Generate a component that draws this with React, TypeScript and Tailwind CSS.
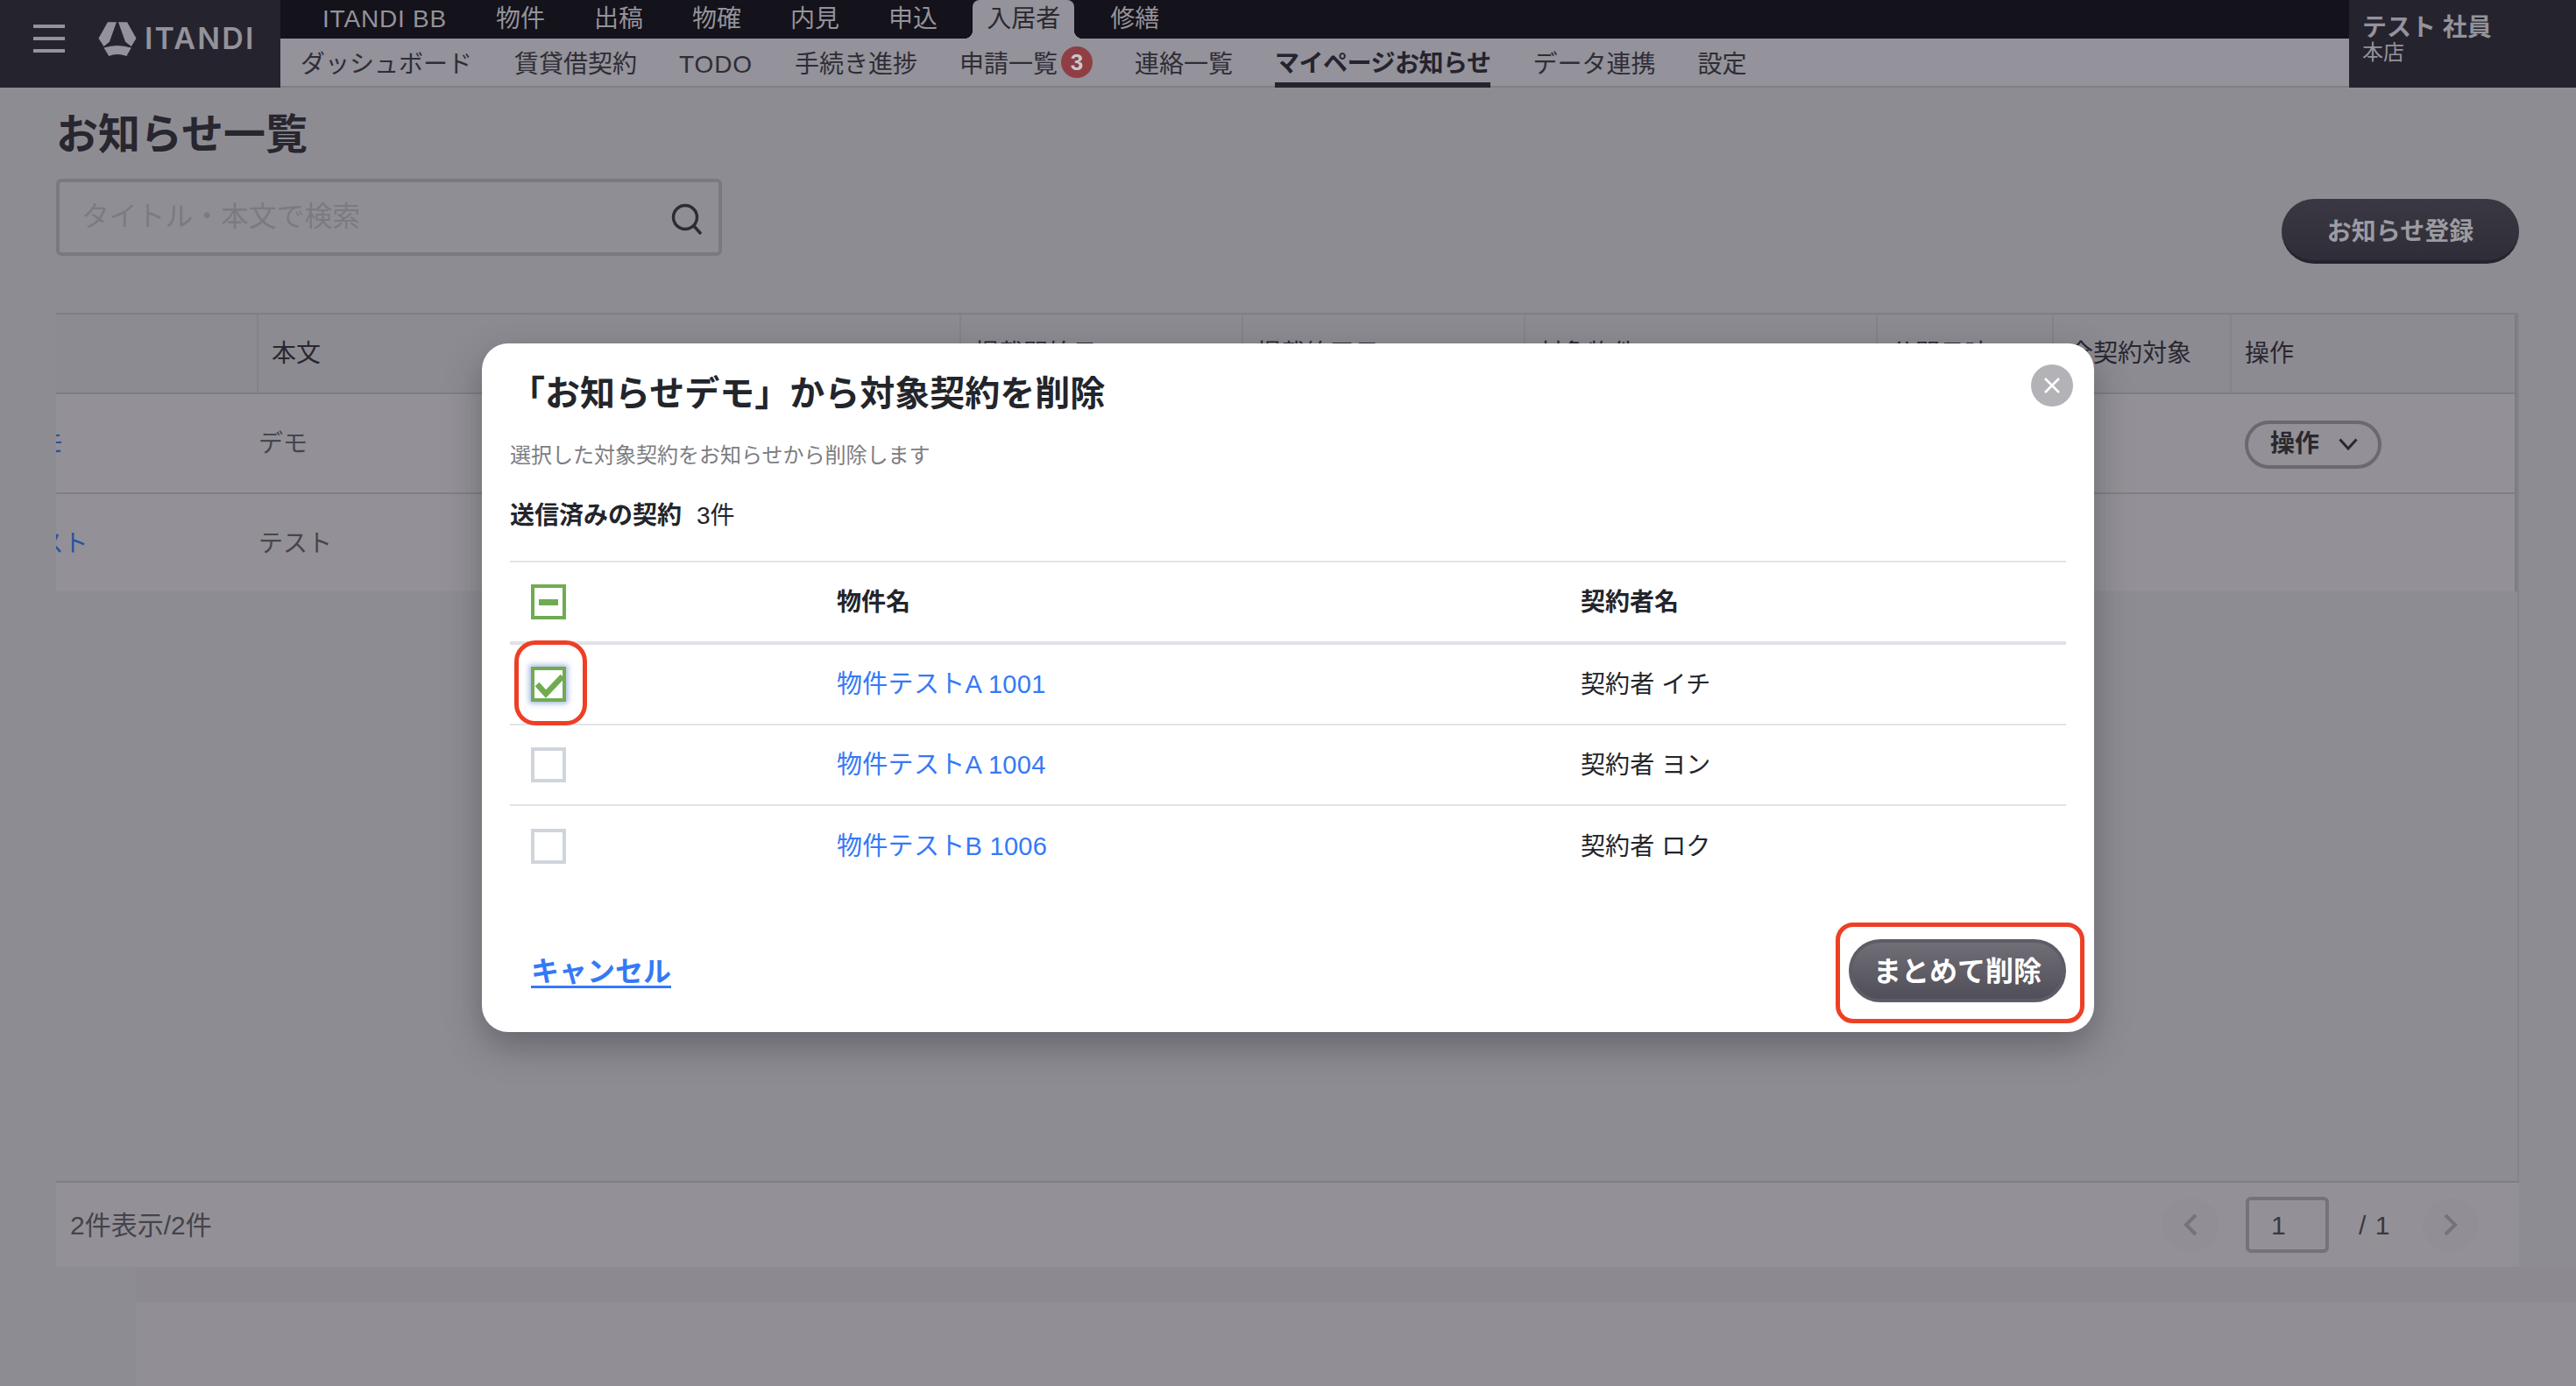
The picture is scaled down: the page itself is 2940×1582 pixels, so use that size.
import React from 'react';

const topNav = ['物件', '出稿', '物確', '内見'];
const subNav = ['ダッシュボード', '賃貸借契約', 'TODO', '手続き進捗'];

const contracts = [
  { id: 1, name: '物件テストA 1001', person: '契約者 イチ', checked: true },
  { id: 2, name: '物件テストA 1004', person: '契約者 ヨン', checked: false },
  { id: 3, name: '物件テストB 1006', person: '契約者 ロク', checked: false },
];

const Header: React.FC = () => (
  <header className="flex h-[100px] shrink-0">
    <div className="flex w-[320px] items-center bg-[#25232e] pb-[12px] pl-[38px]">
      <div className="flex w-[36px] flex-col gap-[10px]">
        <span className="h-[4px] bg-[#94929a]" />
        <span className="h-[4px] bg-[#94929a]" />
        <span className="h-[4px] bg-[#94929a]" />
      </div>
      <svg className="ml-[38px]" width="44" height="39" viewBox="37 12 128 116" fill="#94929a">
        <path d="M68 13 L98 13 L74 80 L55 95 L37 68 Z" />
        <path d="M104 13 L134 13 L165 68 L148 95 L128 80 Z" />
        <path d="M55 100 Q100 84 148 100 L132 128 Q100 116 72 128 Z" />
      </svg>
      <span className="ml-[9px] text-[34px] leading-none font-semibold tracking-[2.2px] text-[#94929a] [font-family:Inter,sans-serif]">
        ITANDI
      </span>
    </div>

    <div className="flex min-w-0 flex-1 flex-col">
      <nav className="flex h-[44px] items-center bg-[#14121a] pl-[48px] text-[28px] leading-none text-[#94929a]">
        <span className="mr-[56px] tracking-[0.8px]">ITANDI BB</span>
        {topNav.map((item) => (
          <span key={item} className="mr-[56px]">
            {item}
          </span>
        ))}
        <span className="mr-[40px]">申込</span>
        <span className="relative flex h-[44px] items-center rounded-t-[8px] bg-[#94929a] px-[16px] text-[#2a2830] before:absolute before:bottom-0 before:-left-[10px] before:h-[10px] before:w-[10px] before:bg-[radial-gradient(circle_at_0_0,#14121a_10px,#94929a_10.5px)] after:absolute after:-right-[10px] after:bottom-0 after:h-[10px] after:w-[10px] after:bg-[radial-gradient(circle_at_100%_0,#14121a_10px,#94929a_10.5px)]">
          入居者
        </span>
        <span className="ml-[41px]">修繕</span>
      </nav>
      <nav className="flex h-[56px] items-stretch gap-[48px] border-b-2 border-[#7f7d85] bg-[#94929a] pl-[23px] text-[28px] leading-none text-[#2f2d36]">
        {subNav.map((item) => (
          <span key={item} className={`flex items-center pt-[6px] ${item === 'TODO' ? 'tracking-[0.9px]' : ''}`}>
            {item}
          </span>
        ))}
        <span className="flex items-center gap-[4px] pt-[6px]">
          申請一覧
          <span className="-mt-[6px] flex h-[36px] w-[36px] items-center justify-center rounded-full bg-[#8f3e44] text-[26px] font-bold text-[#c9c8cb]">
            3
          </span>
        </span>
        <span className="flex items-center pt-[6px]">連絡一覧</span>
        <span className="-mb-[2px] flex items-center border-b-[6px] border-[#25232e] pt-[7px] font-bold tracking-[-0.5px] text-[#25232e]">
          マイページお知らせ
        </span>
        <span className="flex items-center pt-[6px]">データ連携</span>
        <span className="flex items-center pt-[6px]">設定</span>
      </nav>
    </div>

    <div className="w-[259px] bg-[#25232e] pt-[16px] pl-[15px] text-[#94929a]">
      <p className="text-[28px] leading-[32px] font-bold">テスト 社員</p>
      <p className="text-[24px] leading-[24px]">本店</p>
    </div>
  </header>
);

const cellWidths = ['w-[231px]', 'w-[802px]', 'w-[322px]', 'w-[322px]', 'w-[402px]', 'w-[201px]', 'w-[203px]', 'flex-1'];
const headLabels = ['', '本文', '掲載開始日', '掲載終了日', '対象物件', '公開日時', '全契約対象', '操作'];

const NoticeTable: React.FC = () => (
  <div className="flex h-[991px] flex-col border-r-2 border-[#85838a]">
    <div className="border-r-[3px] border-[#7e7d82]">
      <div className="flex h-[93px] border-y-2 border-[#7f7e83] bg-[#8d8b92] text-[28px] text-[#29272f]">
        {headLabels.map((label, i) => (
          <div
            key={i}
            className={`flex items-center border-r-2 border-[#85838a] pl-[15px] last:border-r-0 ${cellWidths[i]} ${i === 6 ? 'pl-[17px]' : ''}`}
          >
            {label}
          </div>
        ))}
      </div>
      <div className="flex h-[114px] items-center border-b-2 border-[#7f7e83] bg-[#939197] pt-[2px] text-[28px] text-[#47454d]">
        <div className="w-[231px] overflow-hidden whitespace-nowrap text-[#2b52a0]">
          <span className="-ml-[159px] block">お知らせデモ</span>
        </div>
        <div className="w-[2267px] pl-[2px]">
          <span className="-ml-[2px] block">デモ</span>
        </div>
        <div className="flex-1">
          <div className="flex h-[55px] w-[156px] items-center justify-center gap-[22px] rounded-full border-4 border-[#6b6970] pl-[2px] font-bold text-[#2a2830]">
            操作
            <svg width="22" height="14" viewBox="0 0 22 14" fill="none" stroke="#2a2830" strokeWidth="3">
              <path d="M1.5 1.5 L11 12 L20.5 1.5" />
            </svg>
          </div>
        </div>
      </div>
      <div className="flex h-[111px] items-center bg-[#939197] pt-[2px] text-[28px] text-[#47454d]">
        <div className="w-[231px] overflow-hidden whitespace-nowrap text-[#2b52a0]">
          <span className="-ml-[159px] block">お知らせテスト</span>
        </div>
        <div className="flex-1">
          <span className="block">テスト</span>
        </div>
      </div>
    </div>
  </div>
);

const Pager: React.FC = () => (
  <div className="flex items-center">
    <span className="flex h-[60px] w-[64px] items-center justify-center rounded-full bg-[#918f95]">
      <svg width="18" height="26" viewBox="0 0 18 26" fill="none" stroke="#75737a" strokeWidth="4">
        <path d="M15 2 L4 13 L15 24" />
      </svg>
    </span>
    <span className="ml-[31px] flex h-[64px] w-[95px] items-center rounded-[6px] border-4 border-[#75737a] pl-[25px] text-[30px] text-[#3a3840]">
      1
    </span>
    <span className="ml-[34px] w-[73px] text-[30px] tracking-[1px] text-[#3a3840]">/ 1</span>
    <span className="flex h-[60px] w-[64px] items-center justify-center rounded-full bg-[#918f95]">
      <svg width="18" height="26" viewBox="0 0 18 26" fill="none" stroke="#75737a" strokeWidth="4">
        <path d="M3 2 L14 13 L3 24" />
      </svg>
    </span>
  </div>
);

const Checkbox: React.FC<{ state: 'on' | 'off' | 'mixed' }> = ({ state }) => {
  if (state === 'off') {
    return <span className="block h-[40px] w-[40px] border-4 border-[#d0d5dc] bg-white" />;
  }
  return (
    <span
      className={`flex h-[40px] w-[40px] items-center justify-center border-4 border-[#70ab52] bg-white ${
        state === 'on' ? 'shadow-[0_0_6px_2px_rgba(90,120,200,0.55)]' : ''
      }`}
    >
      {state === 'mixed' ? (
        <span className="h-[7px] w-[22px] bg-[#70ab52]" />
      ) : (
        <svg className="shrink-0" width="40" height="40" viewBox="0 0 40 40" fill="none" stroke="#70ab52" strokeWidth="6.5">
          <path d="M7 20 L17 31 L36 11" />
        </svg>
      )}
    </span>
  );
};

const RemoveDialog: React.FC = () => (
  <div className="absolute inset-0 flex items-start justify-center pt-[392px]">
    <div className="relative h-[786px] w-[1840px] rounded-[30px] bg-white px-[32px] shadow-[0_16px_40px_rgba(30,28,36,0.35)]">
      <h2 className="mt-[37px] text-[40px] leading-[40px] font-bold text-[#23252b]">
        「お知らせデモ」から対象契約を削除
      </h2>
      <p className="mt-[35px] text-[24px] leading-[32px] text-[#7c7d82]">選択した対象契約をお知らせから削除します</p>
      <p className="mt-[33px] flex gap-[17px] text-[28px] leading-[40px] text-[#23252b]">
        <span className="font-bold">送信済みの契約</span>
        <span>3件</span>
      </p>

      <div className="mt-[31px]">
        <div className="grid h-[96px] grid-cols-[373px_849px_1fr] items-center border-t-2 border-b-4 border-t-[#e1e4e8] border-b-[#dfe2e7] text-[28px] font-bold text-[#23252b]">
          <span className="pl-[24px]">
            <Checkbox state="mixed" />
          </span>
          <span className="pt-[2px]">物件名</span>
          <span className="pt-[2px]">契約者名</span>
        </div>
        {contracts.map((row) => (
          <div
            key={row.id}
            className="grid h-[92px] grid-cols-[373px_849px_1fr] items-center border-b-2 border-[#e1e4e8] text-[29px] text-[#23252b] last:border-b-0"
          >
            <span className="pl-[24px]">
              <Checkbox state={row.checked ? 'on' : 'off'} />
            </span>
            <span className="pt-[2px] tracking-[0.3px] text-[#3579f6]">{row.name}</span>
            <span className="pt-[2px] text-[28px] tracking-[0.1px]">{row.person}</span>
          </div>
        ))}
      </div>

      <div className="mt-[60px] flex h-[72px] items-center justify-between pl-[24px]">
        <span className="pt-[2px] text-[32px] font-bold text-[#3579f6] underline decoration-[3px] underline-offset-[5px]">
          キャンセル
        </span>
        <span className="flex h-[72px] w-[248px] items-center justify-center rounded-full border-4 border-[#5e5c66] bg-gradient-to-b from-[#706e76] to-[#504e58] pt-[2px] text-[32px] font-bold text-white">
          まとめて削除
        </span>
      </div>

      <button className="absolute top-[24px] left-[1768px] flex h-[48px] w-[48px] items-center justify-center rounded-full bg-[#b3b2b7]">
        <svg width="20" height="20" viewBox="0 0 20 20" stroke="#fff" strokeWidth="2.5">
          <path d="M2 2 L18 18 M18 2 L2 18" />
        </svg>
      </button>

      {/* red callouts from the manual */}
      <span className="absolute top-[339px] left-[37px] h-[97px] w-[83px] rounded-[24px] border-[5px] border-[#ee3f25]" />
      <span className="absolute top-[661px] left-[1545px] h-[115px] w-[284px] rounded-[20px] border-[5px] border-[#ee3f25]" />
    </div>
  </div>
);

export default function App() {
  return (
    <div className="relative flex h-screen w-full flex-col overflow-hidden bg-[#8e8c93] [font-family:'Liberation_Sans','Noto_Sans_CJK_JP',sans-serif]">
      <Header />

      <main className="shrink-0 pr-[65px] pl-[64px]">
        <h1 className="mt-[28px] text-[48px] leading-[52px] font-bold text-[#28262f]">お知らせ一覧</h1>

        <div className="mt-[24px] flex h-[153px] items-start justify-between">
          <div className="flex h-[88px] w-[760px] items-center justify-between rounded-[6px] border-4 border-[#7b7980] bg-[#908e95] pr-[18px] pl-[25px]">
            <span className="text-[31.8px] text-[#7c7a81]">タイトル・本文で検索</span>
            <svg className="mt-[4px]" width="36" height="36" viewBox="0 0 36 36" fill="none" stroke="#2d2b35" strokeWidth="3.5">
              <circle cx="16" cy="16" r="13.5" />
              <path d="M26 26 L34 35" />
            </svg>
          </div>
          <span className="mt-[23px] flex h-[74px] w-[271px] items-center justify-center rounded-full border-b-4 border-[#25232e] bg-gradient-to-b from-[#3a3843] to-[#2f2d38] pt-[5px] text-[28px] font-bold text-[#9c9ba1]">
            お知らせ登録
          </span>
        </div>

        <NoticeTable />

        <div className="flex h-[98px] items-center justify-between border-t-2 border-[#7f7d83] bg-[#939197] pr-[46px] pl-[16px]">
          <span className="text-[30px] text-[#45434b]">2件表示/2件</span>
          <Pager />
        </div>
      </main>

      <div className="ml-[155px] h-[40px] shrink-0 bg-[#8c8a90]" />
      <div className="ml-[155px] flex-1 bg-[#918f95]" />

      <RemoveDialog />
    </div>
  );
}
